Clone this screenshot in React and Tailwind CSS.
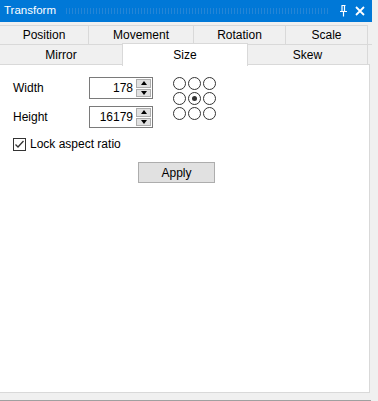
import React from 'react';

const font = { fontFamily: '"Liberation Sans", Arial, sans-serif' };

const SpinBox = ({ value }) => (
  <div className="flex h-[22px] w-[64px] items-center border border-[#7a7a7a] bg-white">
    <span className="flex-1 pr-[3px] text-right leading-none">{value}</span>
    <div className="mr-px flex h-[20px] w-[15px] flex-col gap-px py-px">
      <div className="flex flex-1 items-center justify-center border border-[#adadad] bg-[#e1e1e1]">
        <div className="h-0 w-0 border-x-[3px] border-b-[4px] border-x-transparent border-b-black" />
      </div>
      <div className="flex flex-1 items-center justify-center border border-[#adadad] bg-[#e1e1e1]">
        <div className="h-0 w-0 border-x-[3px] border-t-[4px] border-x-transparent border-t-black" />
      </div>
    </div>
  </div>
);

const Radio = ({ checked }) => (
  <div className="flex h-[13px] w-[13px] items-center justify-center rounded-full border border-[#333333] bg-white">
    {checked && <div className="h-[5px] w-[5px] rounded-full bg-[#333333]" />}
  </div>
);

export default function App() {
  const row1 = [
    ['Position', 'w-[89px]'],
    ['Movement', 'w-[105px]'],
    ['Rotation', 'w-[92px]'],
    ['Scale', 'w-[82px]'],
  ];

  return (
    <div className="flex h-[401px] w-[378px] flex-col overflow-hidden bg-[#f0f0f0] text-[12px] text-black" style={font}>
      {/* Title bar */}
      <div className="flex h-[22px] w-[372px] shrink-0 items-center bg-[#0078d7] text-white">
        <span className="ml-[4px] text-[11.5px]">Transform</span>
        <div className="ml-[9px] mr-[10px] h-[6px] flex-1 bg-[radial-gradient(circle,#2585d6_0.7px,transparent_0.9px)] bg-[length:3px_2px]" />
        <svg width="7" height="12" viewBox="0 0 7 12">
          <path d="M1.5 0.5h4M2 0.5v6M4.5 0.5v6M0 6.5h7M3.5 6.5v5" stroke="white" strokeWidth="1.2" fill="none" />
        </svg>
        <svg width="10" height="10" viewBox="0 0 10 10" className="ml-[8px] mr-[7px]">
          <path d="M1 1L9 9M9 1L1 9" stroke="white" strokeWidth="1.8" />
        </svg>
      </div>

      <div className="mt-[3px] flex w-[372px] flex-col">
        {/* Tab row 1 */}
        <div className="flex h-[19px]">
          {row1.map(([label, w]) => (
            <div key={label} className={`${w} flex items-center justify-center border-t border-r border-[#d9d9d9]`}>
              {label}
            </div>
          ))}
        </div>
        {/* Tab row 2 */}
        <div className="flex h-[20px] border-t border-[#d9d9d9]">
          <div className="flex w-[122px] items-center justify-center">Mirror</div>
          <div className="relative z-10 -mt-[2px] flex h-[23px] w-[126px] items-start justify-center border-x border-t border-[#d9d9d9] bg-white pt-[2px]">
            Size
          </div>
          <div className="flex w-[120px] items-center justify-center border-r border-[#d9d9d9]">Skew</div>
        </div>

        {/* Panel */}
        <div className="flex h-[329px] w-[370px] flex-col border-t border-r border-b border-[#d9d9d9] bg-white pl-[13px] pt-[12px]">
          <div className="flex">
            <div className="flex flex-col gap-[7px]">
              <div className="flex items-center">
                <span className="w-[76px]">Width</span>
                <SpinBox value="178" />
              </div>
              <div className="flex items-center">
                <span className="w-[76px]">Height</span>
                <SpinBox value="16179" />
              </div>
            </div>
            <div className="ml-[20px] grid grid-cols-3 gap-[2px] self-start">
              {[0, 1, 2, 3, 4, 5, 6, 7, 8].map((i) => (
                <Radio key={i} checked={i === 4} />
              ))}
            </div>
          </div>

          <div className="mt-[7px] flex items-center">
            <div className="flex h-[13px] w-[13px] items-center justify-center border border-[#333333]">
              <svg width="11" height="11" viewBox="0 0 11 11">
                <path d="M1.5 5.5L4 8L9.5 2" stroke="#333333" strokeWidth="1.3" fill="none" />
              </svg>
            </div>
            <span className="ml-[4px]">Lock aspect ratio</span>
          </div>

          <div className="ml-[125px] mt-[9px] flex h-[21px] w-[77px] items-center justify-center border border-[#adadad] bg-[#e1e1e1]">
            Apply
          </div>
        </div>

        <div className="mt-[7px] h-px w-[371px] bg-[#a0a0a0]" />
      </div>
    </div>
  );
}
